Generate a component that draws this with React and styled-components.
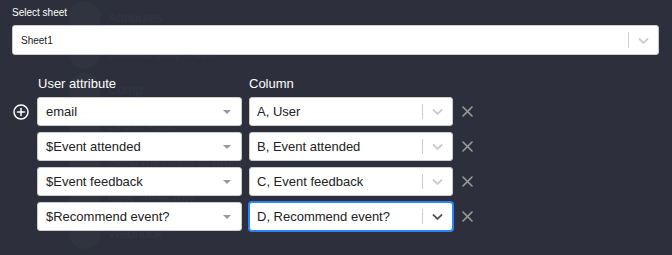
import React from "react";
import styled, { createGlobalStyle } from "styled-components";

const Global = createGlobalStyle`
  html, body { margin: 0; padding: 0; background: #2d303c; }
  body { font-family: "Liberation Sans", Arial, Helvetica, sans-serif; }
  #root { min-height: 255px; }
`;

const Page = styled.div`
  position: relative;
  width: 672px;
  height: 255px;
  overflow: hidden;
  background: #2d303c;
  box-sizing: border-box;
`;

const GhostList = styled.div`
  position: absolute;
  left: 69px;
  top: 1px;
  display: flex;
  flex-direction: column;
  gap: 4px;
  pointer-events: none;
`;

const GhostItem = styled.div`
  display: flex;
  align-items: center;
  gap: 7px;
  height: 32px;
`;

const GhostCircle = styled.div`
  width: 32px;
  height: 32px;
  border-radius: 50%;
  background: #30343f;
`;

const GhostText = styled.span`
  font-size: 13px;
  color: #323642;
`;

const Content = styled.div`
  position: relative;
  padding: 7px 13px 0 12px;
  display: flex;
  flex-direction: column;
`;

const Label = styled.div`
  font-size: 10px;
  line-height: 12px;
  color: #ffffff;
  margin-bottom: 6px;
`;

const SelectBox = styled.div`
  box-sizing: border-box;
  display: flex;
  align-items: stretch;
  height: ${(p) => p.$h || 29}px;
  width: ${(p) => (p.$w ? `${p.$w}px` : "auto")};
  background: #ffffff;
  border: 1px solid ${(p) => (p.$focused ? "#2684ff" : "#cccccc")};
  box-shadow: ${(p) => (p.$focused ? "0 0 0 1px #2684ff" : "none")};
  border-radius: 3px;
  flex-shrink: 0;
`;

const Value = styled.div`
  flex: 1;
  display: flex;
  align-items: center;
  padding-left: ${(p) => p.$pl || 8}px;
  font-size: ${(p) => p.$fs || 13}px;
  color: #222;
  white-space: nowrap;
  overflow: hidden;
`;

const Separator = styled.span`
  width: 1px;
  background: #cccccc;
  margin: 6px 0;
  align-self: stretch;
`;

const Indicator = styled.div`
  width: 29px;
  display: flex;
  align-items: center;
  justify-content: center;
  color: ${(p) => (p.$dark ? "#555" : "#cccccc")};
`;

const Caret = styled.div`
  width: 0;
  height: 0;
  border-left: 4px solid transparent;
  border-right: 4px solid transparent;
  border-top: 4px solid #999;
  margin-right: 10px;
  align-self: center;
`;

const Grid = styled.div`
  display: flex;
  flex-direction: column;
  gap: 6px;
  margin-top: 21px;
`;

const Row = styled.div`
  display: flex;
  align-items: center;
  height: ${(p) => p.$h || 29}px;
`;

const HeaderRow = styled(Row)`
  height: 16px;
  margin-bottom: -1px;
`;

const Slot = styled.div`
  width: 25px;
  flex-shrink: 0;
  display: flex;
  align-items: center;
  padding-left: 1px;
  box-sizing: border-box;
`;

const Heading = styled.div`
  width: ${(p) => p.$w}px;
  margin-right: ${(p) => p.$mr || 0}px;
  padding-left: ${(p) => p.$pl || 0}px;
  box-sizing: border-box;
  font-size: 13px;
  line-height: 16px;
  color: #ffffff;
  flex-shrink: 0;
`;

const Gap = styled.div`
  width: ${(p) => p.$w}px;
  flex-shrink: 0;
`;

const RemoveButton = styled.button`
  border: 0;
  background: transparent;
  padding: 0;
  margin-left: 9px;
  width: 11px;
  height: 11px;
  display: flex;
  color: #9a9a9a;
`;

const Chevron = () => (
  <svg width="17" height="17" viewBox="0 0 20 20" fill="currentColor">
    <path d="M4.516 7.548c0.436-0.446 1.043-0.481 1.576 0l3.908 3.747 3.908-3.747c0.533-0.481 1.141-0.446 1.574 0 0.436 0.445 0.408 1.197 0 1.615-0.406 0.418-4.695 4.502-4.695 4.502-0.217 0.223-0.502 0.335-0.787 0.335s-0.57-0.112-0.789-0.335c0 0-4.287-4.084-4.695-4.502s-0.436-1.17 0-1.615z" />
  </svg>
);

const PlusCircle = () => (
  <svg width="16" height="16" viewBox="0 0 16 16" fill="none" stroke="#ffffff" strokeWidth="1.5" strokeLinecap="round">
    <circle cx="8" cy="8" r="7" />
    <line x1="8" y1="4.5" x2="8" y2="11.5" />
    <line x1="4.5" y1="8" x2="11.5" y2="8" />
  </svg>
);

const XIcon = () => (
  <svg width="11" height="11" viewBox="0 0 11 11" stroke="currentColor" strokeWidth="1.6" strokeLinecap="round">
    <line x1="1" y1="1" x2="10" y2="10" />
    <line x1="10" y1="1" x2="1" y2="10" />
  </svg>
);

const ghosts = [
  "Attributes",
  "Contact properties",
  "Comp",
  "Group Post",
  "Send message to group",
  "New sheet row",
  "Webhook",
];

const rows = [
  { attr: "email", col: "A, User" },
  { attr: "$Event attended", col: "B, Event attended" },
  { attr: "$Event feedback", col: "C, Event feedback" },
  { attr: "$Recommend event?", col: "D, Recommend event?", focused: true },
];

export default function App() {
  return (
    <Page>
      <Global />
      <GhostList aria-hidden="true">
        {ghosts.map((g) => (
          <GhostItem key={g}>
            <GhostCircle />
            <GhostText>{g}</GhostText>
          </GhostItem>
        ))}
      </GhostList>
      <Content>
        <Label>Select sheet</Label>
        <SelectBox $h={30}>
          <Value $fs={10}>Sheet1</Value>
          <Separator />
          <Indicator>
            <Chevron />
          </Indicator>
        </SelectBox>
        <Grid>
          <HeaderRow>
            <Slot />
            <Heading $w={205} $mr={7} $pl={1}>User attribute</Heading>
            <Heading $w={204}>Column</Heading>
          </HeaderRow>
          {rows.map((r, i) => (
            <Row key={r.attr}>
              <Slot>{i === 0 && <PlusCircle />}</Slot>
              <SelectBox $w={205}>
                <Value>{r.attr}</Value>
                <Caret />
              </SelectBox>
              <Gap $w={7} />
              <SelectBox $w={204} $focused={r.focused}>
                <Value $pl={7}>{r.col}</Value>
                <Separator />
                <Indicator $dark={r.focused}>
                  <Chevron />
                </Indicator>
              </SelectBox>
              <RemoveButton aria-label="Remove">
                <XIcon />
              </RemoveButton>
            </Row>
          ))}
        </Grid>
      </Content>
    </Page>
  );
}
